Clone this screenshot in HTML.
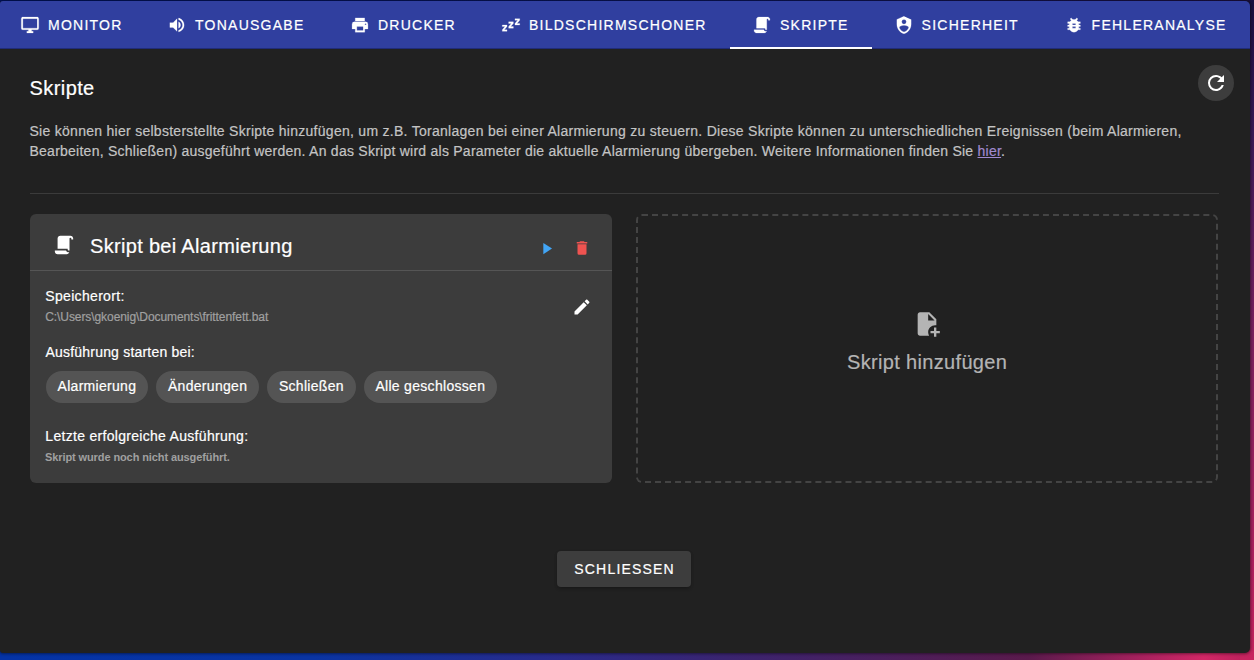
<!DOCTYPE html>
<html><head><meta charset="utf-8">
<style>
*{box-sizing:border-box;margin:0;padding:0}
html,body{width:1254px;height:660px;overflow:hidden}
body{position:relative;font-family:"Liberation Sans",sans-serif;
background:linear-gradient(90deg,#0433a6 0%,#0a34a2 25%,#2a2a8a 45%,#3a2470 58%,#5a1a4c 82%,#b02260 92%,#d22766 96%,#b81f5a 100%);}
.bgtop{position:absolute;left:0;top:0;width:1254px;height:330px;background:linear-gradient(90deg,#001466 0%,#0c1660 60%,#1e1048 100%)}
.bgright{position:absolute;left:1240px;top:0;width:14px;height:660px;background:linear-gradient(180deg,#1a1040 0%,#3a1a58 20%,#7a2060 50%,#a82060 80%,#c8245f 100%)}
.dlg{position:absolute;left:0;top:1px;width:1249.5px;-webkit-text-stroke:0.2px currentColor;height:652px;background:#212121;border-radius:3px 5px 5px 3px;overflow:hidden;box-shadow:0 0 3px 1px rgba(0,0,0,.45)}
.tabs{position:absolute;left:0;top:0;width:1250px;height:48px;background:#303f9f;box-shadow:inset 0 -1px 0 rgba(0,0,30,.3)}
.tab{position:absolute;top:0;height:48px;display:flex;align-items:center;color:#fff;font-size:14px;letter-spacing:1.25px;white-space:nowrap}
.tab svg{width:20px;height:20px;margin-right:8px;fill:#fff;stroke:#fff;stroke-width:0.3px;flex:none;position:relative;top:0}
.slider{position:absolute;left:730px;top:46px;width:142px;height:2px;background:#fff}
.abs{position:absolute;white-space:nowrap}
svg{display:block}
.refresh{position:absolute;left:1198px;top:64px;width:36px;height:36px;border-radius:50%;background:#3d3d3d;display:flex;align-items:center;justify-content:center}
.refresh svg{width:24px;height:24px;fill:#fff}
.para{font-size:14px;line-height:20px;color:#c4c4c4;letter-spacing:0.246px}
.link{color:#a08ad0;text-decoration:underline}
.divider{position:absolute;left:29.5px;top:192px;width:1189.5px;height:1px;background:#3b3b3b}
.card{position:absolute;left:30px;top:213px;width:582px;height:269px;background:#3c3c3c;border-radius:6px}
.cicon{position:absolute;left:23px;top:20.4px;width:22px;height:22px;fill:#fff}
.ico{position:absolute;width:20px;height:20px}
.chdiv{position:absolute;left:0;top:56px;width:582px;height:1px;background:#555}
.lbl{font-size:14px;line-height:20px;color:#fff;letter-spacing:0.2px}
.chip{position:absolute;top:157.2px;height:32px;border-radius:16px;background:#545454;color:#fff;font-size:14px;line-height:30.6px;text-align:center;letter-spacing:0.3px;white-space:nowrap}
.add{position:absolute;left:636px;top:213px;width:582px;height:269px}
.fplus{position:absolute;left:277px;top:96px;width:28px;height:28px;fill:#b4b4b4}
.btn{position:absolute;left:557px;top:550px;width:134px;height:36px;border-radius:4px;background:#3d3d3d;color:#fff;font-size:14px;line-height:36px;text-align:center;letter-spacing:1.2px;text-indent:1.2px;box-shadow:0 2px 4px -1px rgba(0,0,0,.2),0 1px 3px 0 rgba(0,0,0,.15)}
</style></head><body>
<div class="bgtop"></div>
<div class="bgright"></div>
<div class="dlg">
  <div class="tabs">
    <div class="tab" style="left:20px"><svg viewBox="-0.632 -0.632 25.263 25.263"><path d="M21,16H3V4H21M21,2H3C1.89,2 1,2.89 1,4V16A2,2 0 0,0 3,18H10V20H8V22H16V20H14V18H21A2,2 0 0,0 23,16V4C23,2.89 22.1,2 21,2Z"/></svg><span>MONITOR</span></div>
    <div class="tab" style="left:167px"><svg viewBox="-0.632 -0.632 25.263 25.263"><path d="M14,3.23V5.29C16.89,6.15 19,8.83 19,12C19,15.17 16.89,17.84 14,18.7V20.77C18,19.86 21,16.28 21,12C21,7.72 18,4.14 14,3.23M16.5,12C16.5,10.23 15.5,8.71 14,7.97V16C15.5,15.29 16.5,13.76 16.5,12M3,9V15H7L12,20V4L7,9H3Z"/></svg><span>TONAUSGABE</span></div>
    <div class="tab" style="left:350px"><svg viewBox="-0.632 -0.632 25.263 25.263"><path d="M18,3H6V7H18M19,12A1,1 0 0,1 18,11A1,1 0 0,1 19,10A1,1 0 0,1 20,11A1,1 0 0,1 19,12M16,19H8V14H16M19,8H5A3,3 0 0,0 2,11V17H6V21H18V17H22V11A3,3 0 0,0 19,8Z"/></svg><span>DRUCKER</span></div>
    <div class="tab" style="left:501px"><svg viewBox="-0.632 -0.632 25.263 25.263"><path d="M23,12H17V10L20.39,6H17V4H23V6L19.62,10H23V12M15,16H9V14L12.39,10H9V8H15V10L11.62,14H15V16M7,20H1V18L4.39,14H1V12H7V14L3.62,18H7V20Z"/></svg><span>BILDSCHIRMSCHONER</span></div>
    <div class="tab" style="left:752px"><svg viewBox="-0.632 -0.632 25.263 25.263"><path d="M17.8,20C17.4,21.2 16.3,22 15,22H5C3.3,22 2,20.7 2,19V18H5L14.2,18C14.6,19.2 15.7,20 17,20H17.8M19,2C20.7,2 22,3.3 22,5V6H20V5C20,4.4 19.6,4 19,4C18.4,4 18,4.4 18,5V18H17C16.4,18 16,17.6 16,17V16H5V5C5,3.3 6.3,2 8,2H19Z"/></svg><span>SKRIPTE</span></div>
    <div class="tab" style="left:893.6px"><svg viewBox="-0.632 -0.632 25.263 25.263"><path d="M12,1L3,5V11C3,16.55 6.84,21.74 12,23C17.16,21.74 21,16.55 21,11V5M12,5A3,3 0 0,1 15,8A3,3 0 0,1 12,11A3,3 0 0,1 9,8A3,3 0 0,1 12,5M17.13,17C15.92,18.85 14.11,20.24 12,20.92C9.89,20.24 8.08,18.85 6.87,17C6.53,16.5 6.24,16 6,15.47C6,13.82 8.71,12.47 12,12.47C15.29,12.47 18,13.79 18,15.47C17.76,16 17.47,16.5 17.13,17Z"/></svg><span>SICHERHEIT</span></div>
    <div class="tab" style="left:1063.6px"><svg viewBox="-0.632 -0.632 25.263 25.263"><path d="M14,12H10V10H14M14,16H10V14H14M20,8H17.19C16.74,7.22 16.12,6.55 15.37,6.04L17,4.41L15.59,3L13.42,5.17C12.96,5.06 12.5,5 12,5C11.5,5 11.04,5.06 10.59,5.17L8.41,3L7,4.41L8.62,6.04C7.88,6.55 7.26,7.22 6.81,8H4V10H6.09C6.04,10.33 6,10.66 6,11V12H4V14H6V15C6,15.34 6.04,15.67 6.09,16H4V18H6.81C7.85,19.79 9.78,21 12,21C14.22,21 16.15,19.79 17.19,18H20V16H17.91C17.96,15.67 18,15.34 18,15V14H20V12H18V11C18,10.66 17.96,10.33 17.91,10H20V8Z"/></svg><span>FEHLERANALYSE</span></div>
    <div class="slider"></div>
  </div>

  <div class="abs" style="left:29.6px;top:75.4px;font-size:20px;line-height:24px;color:#fff;letter-spacing:0.4px">Skripte</div>
  <div class="refresh"><svg viewBox="0 0 24 24"><path d="M17.65,6.35C16.2,4.9 14.21,4 12,4A8,8 0 0,0 4,12A8,8 0 0,0 12,20C15.73,20 18.84,17.45 19.73,14H17.65C16.83,16.33 14.61,18 12,18A6,6 0 0,1 6,12A6,6 0 0,1 12,6C13.66,6 15.14,6.69 16.22,7.78L13,11H20V4L17.65,6.35Z"/></svg></div>
  <div class="abs para" style="left:29.5px;top:119.6px"><span style="letter-spacing:0.278px">Sie können hier selbsterstellte Skripte hinzufügen, um z.B. Toranlagen bei einer Alarmierung zu steuern. Diese Skripte können zu unterschiedlichen Ereignissen (beim Alarmieren,</span><br>Bearbeiten, Schließen) ausgeführt werden. An das Skript wird als Parameter die aktuelle Alarmierung übergeben. Weitere Informationen finden Sie <span class="link">hier</span>.</div>
  <div class="divider"></div>
  <div class="card">
    <svg class="cicon" viewBox="0 0 24 24"><path d="M17.8,20C17.4,21.2 16.3,22 15,22H5C3.3,22 2,20.7 2,19V18H5L14.2,18C14.6,19.2 15.7,20 17,20H17.8M19,2C20.7,2 22,3.3 22,5V6H20V5C20,4.4 19.6,4 19,4C18.4,4 18,4.4 18,5V18H17C16.4,18 16,17.6 16,17V16H5V5C5,3.3 6.3,2 8,2H19Z"/></svg>
    <div class="abs" style="left:60px;top:20px;font-size:20px;line-height:24px;color:#fff;letter-spacing:0.32px">Skript bei Alarmierung</div>
    <svg class="ico" style="left:506.85px;top:24.6px;width:19px;height:19px;fill:#42a5f5" viewBox="0 0 24 24"><path d="M8,5.14V19.14L19,12.14L8,5.14Z"/></svg>
    <svg class="ico" style="left:543.1px;top:25.06px;width:18px;height:18px;fill:#ef5350" viewBox="0 0 24 24"><path d="M19,4H15.5L14.5,3H9.5L8.5,4H5V6H19M6,19A2,2 0 0,0 8,21H16A2,2 0 0,0 18,19V7H6V19Z"/></svg>
    <div class="chdiv"></div>
    <div class="abs lbl" style="left:15.3px;top:72.05px;letter-spacing:0.32px">Speicherort:</div>
    <svg class="ico" style="left:541.7px;top:83.1px;fill:#fff" viewBox="0 0 24 24"><path d="M20.71,7.04C21.1,6.65 21.1,6 20.71,5.63L18.37,3.29C18,2.9 17.35,2.9 16.96,3.29L15.12,5.12L18.87,8.87M3,17.25V21H6.75L17.81,9.93L14.06,6.18L3,17.25Z"/></svg>
    <div class="abs" style="left:15.2px;top:94.94px;font-size:12px;line-height:16px;color:#a0a0a0;letter-spacing:-0.075px">C:\Users\gkoenig\Documents\frittenfett.bat</div>
    <div class="abs lbl" style="left:15.5px;top:128.35px">Ausführung starten bei:</div>
    <div class="chip" style="left:15.8px;width:102.2px">Alarmierung</div>
    <div class="chip" style="left:126.4px;width:102.4px">Änderungen</div>
    <div class="chip" style="left:237.1px;width:88.6px">Schließen</div>
    <div class="chip" style="left:333.9px;width:132.9px">Alle geschlossen</div>
    <div class="abs lbl" style="left:15.3px;top:212.05px;letter-spacing:0.3px">Letzte erfolgreiche Ausführung:</div>
    <div class="abs" style="left:15px;top:235.29px;font-size:11px;line-height:16px;color:#a0a0a0;font-weight:bold;-webkit-text-stroke:0;letter-spacing:-0.1px">Skript wurde noch nicht ausgeführt.</div>
  </div>
  <div class="add">
    <div style="position:absolute;left:0;top:0;width:582px;height:269px;border:2px dashed #444;border-radius:6px"></div>
    <svg class="fplus" viewBox="0 0 24 24"><path d="M14 2H6C4.89 2 4 2.89 4 4V20C4 21.11 4.89 22 6 22H13.81C13.28 21.09 13 20.05 13 19C13 15.69 15.69 13 19 13C19.34 13 19.67 13.03 20 13.08V8L14 2M13 9V3.5L18.5 9H13M23 20H20V23H18V20H15V18H18V15H20V18H23V20Z"/></svg>
    <div class="abs" style="left:0;width:582px;text-align:center;top:136px;font-size:20px;line-height:24px;color:#b4b4b4;letter-spacing:0.33px;text-indent:0.33px">Skript hinzufügen</div>
  </div>
  <div class="btn">SCHLIESSEN</div>
</div>
</body></html>
